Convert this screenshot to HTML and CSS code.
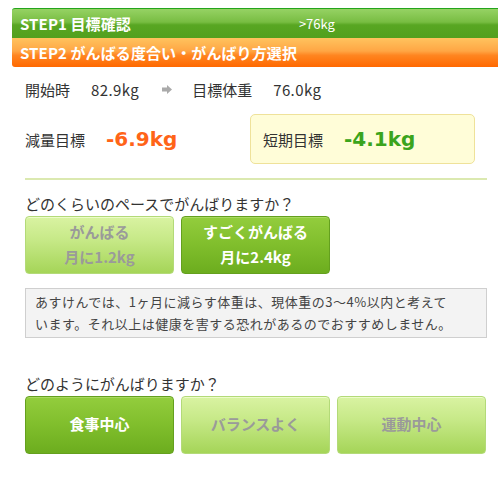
FILE: index.html
```html
<!DOCTYPE html>
<html lang="ja">
<head>
<meta charset="utf-8">
<link rel="stylesheet" href="styles.css">
</head>
<body>
<div class="steps">
  <div class="step step1"><span class="step-title">STEP1 目標確認</span><span class="step-value">&gt;76kg</span></div>
  <div class="step step2"><span class="step-title">STEP2 がんばる度合い・がんばり方選択</span></div>
</div>
<div class="content">
  <div class="summary">
    <span class="label">開始時</span><span class="val">82.9kg</span>
    <svg class="arrow" width="10" height="9" viewBox="0 0 10 9"><path d="M0 2.5h5V0l5 4.5L5 9V6.5H0z" fill="#aaa"/></svg>
    <span class="label">目標体重</span><span class="val">76.0kg</span>
  </div>
  <div class="goals">
    <div class="goal"><span class="goal-label">減量目標</span><span class="goal-num orange">-6.9kg</span></div>
    <div class="goal short"><span class="goal-label">短期目標</span><span class="goal-num green">-4.1kg</span></div>
  </div>
  <div class="question q1">どのくらいのペースでがんばりますか？</div>
  <div class="btns">
    <div class="btn off">がんばる<br>月に1.2kg</div>
    <div class="btn on">すごくがんばる<br>月に2.4kg</div>
  </div>
  <div class="note">あすけんでは、1ヶ月に減らす体重は、現体重の3～4%以内と考えて<br>います。それ以上は健康を害する恐れがあるのでおすすめしません。</div>
  <div class="question q2">どのようにがんばりますか？</div>
  <div class="btns three">
    <div class="btn on">食事中心</div>
    <div class="btn off">バランスよく</div>
    <div class="btn off">運動中心</div>
  </div>
</div>
</body>
</html>
```
FILE: styles.css
```css
html, body {
  margin: 0;
  padding: 0;
  background: #fff;
  overflow: hidden;
}
body {
  font-family: "Noto Sans CJK JP", "DejaVu Sans", sans-serif;
  color: #333;
  width: 498px;
}
.steps {
  padding: 8px 0 0 12px;
}
.step {
  width: 500px;
  height: 29px;
  display: flex;
  align-items: center;
  color: #fff;
  font-weight: bold;
  font-size: 15px;
  box-sizing: border-box;
  padding-left: 8px;
}
.step1 {
  border-top: 1px solid #23a51c;
  height: 30px;
  border-radius: 3px 0 0 0;
  background: linear-gradient(#96d264, #78bd42 45%, #58a622 55%, #52a01e);
}
.step2 {
  border-radius: 0 0 0 3px;
  background: linear-gradient(#ffc35e, #ffa644 45%, #ff8520 60%, #ff6800);
}
.step-title {
  display: inline-block;
  letter-spacing: 0.1px;
}
.step-value {
  font-weight: normal;
  font-size: 13px;
  margin-left: 168px;
}
.content {
  padding: 0 11px 0 25px;
  width: 462px;
}
.summary {
  display: flex;
  align-items: center;
  height: 20px;
  margin-top: 12px;
  font-size: 15px;
}
.summary .val { margin-left: 21px; letter-spacing: 0.4px; }
.summary .arrow { margin: 0 20px 0 23px; }
.goals {
  display: flex;
  align-items: center;
  margin-top: 15px;
  height: 50px;
  padding-bottom: 14px;
  border-bottom: 2px solid #dbe9b0;
}
.goal {
  display: flex;
  align-items: center;
  width: 225px;
  height: 50px;
  box-sizing: border-box;
}
.goal.short {
  background: #fffdd8;
  border: 1px solid #efe29a;
  border-radius: 5px;
  padding-left: 12px;
}
.goal-label { font-size: 15px; }
.goal-num {
  font-family: "DejaVu Sans", sans-serif;
  font-weight: bold;
  font-size: 20px;
  margin-left: 21px;
}
.orange { color: #ff6418; }
.green { color: #3ba41c; }
.question {
  font-size: 15px;
  line-height: 20px;
}
.q1 { margin-top: 14px; }
.q2 { margin-top: 36px; }
.btns {
  display: flex;
  gap: 7px;
  margin-top: 2px;
}
.btn {
  width: 149px;
  height: 58px;
  box-sizing: border-box;
  border-radius: 4px;
  display: flex;
  align-items: center;
  justify-content: center;
  text-align: center;
  font-weight: bold;
  font-size: 15px;
  line-height: 25px;
  padding-bottom: 3px;
}
.btn.off {
  color: #9a9a9a;
  background: linear-gradient(#d9f3a2, #c7e988 40%, #a5d558);
  border: 1px solid #b3da78;
  box-shadow: inset 0 1px 0 #ecfcc8;
}
.btn.on {
  color: #fff;
  background: linear-gradient(#93cd3d, #80be2c 50%, #6cad1e);
  border: 1px solid #64a01e;
  box-shadow: inset 0 1px 0 #a8d860;
}
.note {
  margin-top: 14px;
  background: #f3f3f3;
  border: 1px solid #cfcfcf;
  padding: 2px 9px 0;
  font-size: 13px;
  line-height: 22px;
  letter-spacing: 0.5px;
  color: #444;
  height: 50px;
  box-sizing: border-box;
  white-space: nowrap;
}
```
